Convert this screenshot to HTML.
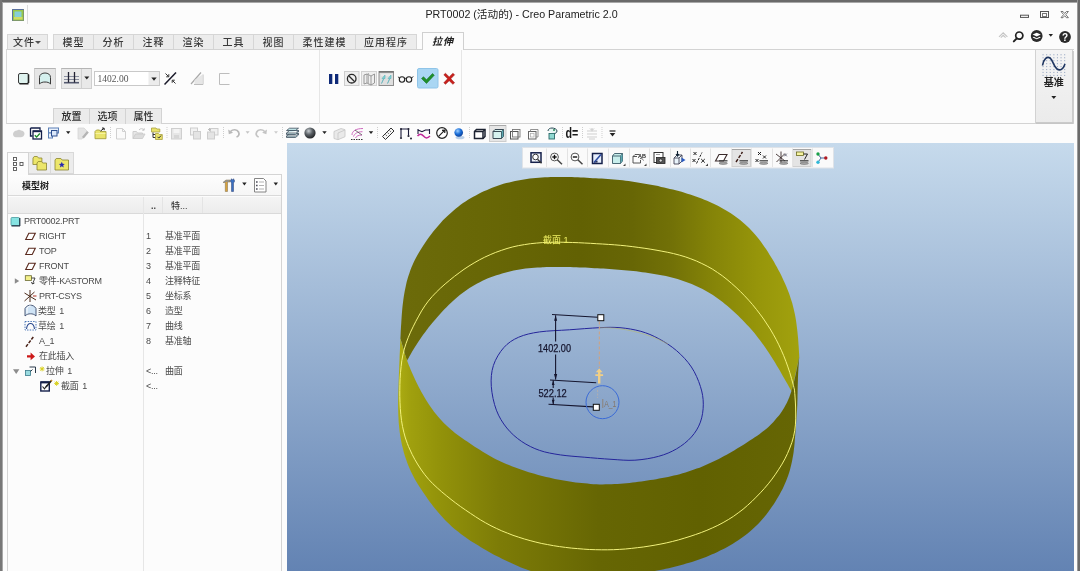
<!DOCTYPE html>
<html lang="zh-CN">
<head>
<meta charset="utf-8">
<title>PRT0002 (活动的) - Creo Parametric 2.0</title>
<style>
*{box-sizing:border-box;margin:0;padding:0}
html,body{width:1080px;height:571px;overflow:hidden;background:#fcfcfc}
body{position:relative;font-family:"Liberation Sans","Noto Sans CJK SC",sans-serif;font-size:9px;color:#3c3c3c}
.abs{position:absolute}
#title,.tab,.stab,.row,.txt,svg{will-change:transform}
#frameT{left:0;top:0;width:1080px;height:3px;background:#6a6a6a;border-bottom:1px solid #a8a8a8}
#frameL{left:0;top:0;width:2px;height:571px;background:#777}
#frameL2{left:2px;top:2px;width:1px;height:569px;background:#a8a8a8}
#frameR{left:1077px;top:0;width:3px;height:571px;background:#6a6a6a;border-left:1px solid #9a9a9a}
#frameR2{display:none}
#title{left:0;top:6px;width:1043px;text-align:center;font-size:10.7px;color:#222;white-space:nowrap}
/* ribbon tabs */
.tab{top:34px;height:15px;background:#ececec;border:1px solid #d6d6d6;border-bottom:none;font-size:10px;font-weight:500;line-height:16px;text-align:center;color:#3a3a3a;letter-spacing:1px;white-space:nowrap}
#tabActive{top:32px;height:18px;background:#fcfcfc;border:1px solid #d0d0d0;border-bottom:none;font-style:italic;font-weight:bold;color:#222;line-height:18px}
#ribbon{left:6px;top:49px;width:1068px;height:75px;border-top:1px solid #d3d3d3;border-bottom:1px solid #d3d3d3;border-left:1px solid #d9d9d9;background:#fcfcfc}
.stab{top:108px;height:16px;background:#ebebeb;border:1px solid #d3d3d3;border-bottom:none;font-size:10px;font-weight:500;line-height:15px;text-align:center;color:#2e2e2e;white-space:nowrap}
/* viewport */
#vp{left:287px;top:143px;width:787px;height:428px;background:linear-gradient(#c6daec 0%,#6383b3 100%);overflow:hidden}
/* tree */
#treeBox{left:7px;top:173px;width:275px;height:398px;border:1px solid #d2d2d2;border-bottom:none;background:#fcfcfc}
.row{height:15px;line-height:15px;font-size:9px;letter-spacing:-.25px;word-spacing:1.5px;color:#4a4a4a;white-space:nowrap}
</style>
</head>
<body>
<div id="frameT" class="abs"></div>
<div id="frameL" class="abs"></div>
<div id="frameL2" class="abs"></div>
<div id="frameR" class="abs"></div>
<div id="frameR2" class="abs"></div>

<div id="title" class="abs">PRT0002 (活动的) - Creo Parametric 2.0</div>

<div class="abs tab" style="left:7px;width:41px;text-align:left;padding-left:5px">文件<span class="abs" style="left:27px;top:6px;width:0;height:0;border:3px solid transparent;border-top:3px solid #555;border-bottom:none"></span></div>
<div class="abs tab" style="left:53px;width:41px">模型</div>
<div class="abs tab" style="left:93px;width:41px">分析</div>
<div class="abs tab" style="left:133px;width:41px">注释</div>
<div class="abs tab" style="left:173px;width:41px">渲染</div>
<div class="abs tab" style="left:213px;width:41px">工具</div>
<div class="abs tab" style="left:253px;width:41px">视图</div>
<div class="abs tab" style="left:293px;width:63px">柔性建模</div>
<div class="abs tab" style="left:355px;width:62px">应用程序</div>
<div id="tabActive" class="abs tab" style="left:422px;width:42px;z-index:3">拉伸</div>

<div id="ribbon" class="abs"></div>
<div class="abs stab" style="left:53px;width:37px">放置</div>
<div class="abs stab" style="left:89px;width:37px">选项</div>
<div class="abs stab" style="left:125px;width:37px">属性</div>
<svg class="abs" style="left:0;top:0;z-index:5" width="1080" height="143" viewBox="0 0 1080 143">
<!-- app icon -->
<rect x="12.500" y="9.500" width="11" height="11" fill="#98c848" stroke="#7f9a6a" stroke-width="1"/>
<path d="M12.500 20.500v-11h11" fill="none" stroke="#5a70a0" stroke-width="1"/>
<rect x="14.500" y="11.500" width="7" height="5.500" fill="#86cfd8"/>
<rect x="14" y="17" width="8.500" height="2.500" fill="#cfdc64"/>
<path d="M27.500 5v19" stroke="#dcdcdc" stroke-width="1"/>
<!-- window buttons -->
<g fill="none" stroke="#555" stroke-width="1">
<rect x="1020.5" y="15.2" width="8" height="2.2" fill="#fff"/>
<rect x="1040.5" y="11.5" width="8" height="6" />
<rect x="1042.5" y="13.5" width="4" height="3" stroke="#777"/>
<path d="M1061 11.5h2l1.7 2 1.7-2h2l-2.6 3.1 2.6 3.1h-2l-1.7-2-1.7 2h-2l2.6-3.1z" fill="#fff" stroke="#666" stroke-width=".9"/>
</g>
<!-- quick icons row -->
<path d="M999 36.8l4.2-4 4.2 4M1000.8 37.6l2.4-2.3 2.4 2.3" fill="none" stroke="#c4c4c4" stroke-width="1.1"/>
<circle cx="1019.3" cy="35.6" r="3.6" fill="none" stroke="#222" stroke-width="1.7"/>
<path d="M1016.8 38.4l-3 3" stroke="#222" stroke-width="2" stroke-linecap="round"/>
<circle cx="1036.7" cy="36" r="5.9" fill="#2b2b2b"/>
<path d="M1032.6 34.6l4.1-1.9 4.1 1.9-4.1 1.9zM1032.6 37.4l1.2-.6 2.9 1.4 2.9-1.4 1.2.6-4.1 1.9z" fill="#fff"/>
<path d="M1048.6 34l4.4 0-2.2 2.8z" fill="#222"/>
<circle cx="1065" cy="37" r="5.9" fill="#2b2b2b"/>
<text x="1065" y="40.6" font-family="Liberation Sans, sans-serif" font-weight="bold" font-size="10" fill="#fff" text-anchor="middle">?</text>

<!-- ribbon group separators -->
<path d="M319.5 50v74M461.5 50v74" stroke="#e6e6e6" stroke-width="1"/>
<!-- solid icon -->
<rect x="18.5" y="73.5" width="10" height="10" rx="1.5" fill="#dff3ef" stroke="#3a3a3a" stroke-width="1"/>
<path d="M28.5 74.5v8.5M19.5 83.7h9" stroke="#222" stroke-width="1.6" fill="none"/>
<!-- surface button (pressed) -->
<rect x="34.5" y="68.5" width="21" height="20" fill="#e6e6e6" stroke="#d0d0d0"/>
<path d="M34.5 68.5h21" stroke="#b5b5b5"/>
<path d="M39.5 84v-6.5c0-3 2.5-4.5 5.5-4.5s5.5 1.500 5.500 4.500v6.500c-1.500-1.500-3-2-5.500-2s-4 .5-5.500 2z" fill="#d5f0ee" stroke="#3a3a3a" stroke-width="1"/>
<!-- depth option button -->
<rect x="61.500" y="68.500" width="30" height="20" fill="#e9e9e9" stroke="#cfcfcf"/>
<path d="M61.500 68.500h30" stroke="#b5b5b5"/>
<path d="M81.500 69v19" stroke="#d0d0d0"/>
<path d="M64 76.500h15M64 79.500h15" stroke="#8a8fa0" stroke-width="1"/>
<path d="M64 82.700h15" stroke="#555a70" stroke-width="1.600"/>
<path d="M68.500 72v10.500M74.500 72v10.500" stroke="#223" stroke-width="1.300"/>
<path d="M84.300 76.500h5l-2.500 3z" fill="#222"/>
<!-- input -->
<rect x="94.500" y="71.500" width="65" height="14" fill="#fff" stroke="#c9c9c9"/>
<rect x="148.500" y="72" width="10.500" height="13" fill="#ececec"/>
<path d="M151.300 77.500h5.400l-2.700 3.200z" fill="#222"/>
<text x="97.500" y="82" font-family="Liberation Serif, serif" font-size="9.500" fill="#555" textLength="31" lengthAdjust="spacingAndGlyphs">1402.00</text>
<!-- flip icon -->
<path d="M164.500 84.500l11.500-12" stroke="#1a1a2a" stroke-width="1.500"/>
<path d="M165.500 73.500l3 3M168.800 76.800v-2.600M168.800 76.800h-2.600" stroke="#333" stroke-width="1" fill="none"/>
<path d="M175.500 83.500l-3-3M172.200 80.200v2.600M172.200 80.200h2.600" stroke="#333" stroke-width="1" fill="none"/>
<!-- disabled icons -->
<path d="M191 84l10-11.500" stroke="#a8a8a8" stroke-width="1.200"/>
<path d="M194 84.500h9v-10" stroke="#bdbdbd" stroke-width="1" fill="none"/>
<path d="M194.500 84v-4l8-5.500v9.500z" fill="#e6e6e6"/>
<path d="M229.500 73.500h-10v11h10" stroke="#bdbdbd" stroke-width="1" fill="none"/>
<!-- pause -->
<rect x="329" y="74" width="3.300" height="10" fill="#0f2a78"/>
<rect x="335" y="74" width="3.300" height="10" fill="#0f2a78"/>
<!-- no preview -->
<rect x="344.500" y="71.500" width="14.500" height="14" fill="#efefef" stroke="#cdcdcd"/>
<circle cx="351.700" cy="78.700" r="4.300" fill="none" stroke="#2a2a2a" stroke-width="1.300"/>
<path d="M348.700 75.700l6 6" stroke="#2a2a2a" stroke-width="1.300"/>
<!-- btn3 -->
<rect x="361.500" y="71.500" width="15" height="14" fill="#efefef" stroke="#d2d2d2"/>
<path d="M364 75l3-1v9l-3 1zM367 74l4 2v9l-4-2M371 76l3.500-2v9l-3.500 2" fill="none" stroke="#8e8e8e" stroke-width=".9"/>
<path d="M368.500 73v11.500" stroke="#aaa" stroke-width=".8"/>
<!-- btn4 pressed -->
<rect x="379" y="71.500" width="14.500" height="14" fill="#dedede" stroke="#8d8d8d"/>
<path d="M379 72h14.500" stroke="#6c6c6c" stroke-width="1.400"/>
<path d="M381 75h11" stroke="#f4f4f4" stroke-width="1"/>
<path d="M381.500 83.500l2-5h-1.500l3-3.500v3.500h-1zM387.500 83.500l2-5h-1.500l3-3.500v3.500h-1z" fill="#7fd6d6" stroke="#5ab0b8" stroke-width=".6"/>
<!-- glasses -->
<circle cx="402" cy="79.500" r="2.700" fill="none" stroke="#222" stroke-width="1.100"/>
<circle cx="409" cy="79.500" r="2.700" fill="none" stroke="#222" stroke-width="1.100"/>
<path d="M404.600 78.800q.9-.8 1.800 0M399.400 78.500l-1-1.800M411.500 78.200l1.700-1.800" fill="none" stroke="#222" stroke-width="1"/>
<!-- OK check -->
<rect x="417.500" y="68.500" width="20.500" height="19.500" rx="1.500" fill="#a9d6f3" stroke="#8fc4e8"/>
<path d="M421.500 78.500l2-1.800 3 3 6-6.200 1.800 1.700-7.800 8.300z" fill="#1f8f2a" stroke="#0f6a1a" stroke-width=".5"/>
<!-- cancel X -->
<path d="M443.800 74.800l1.700-1.500 3.700 3.600 3.700-3.600 1.700 1.500-3.800 4 3.800 4-1.700 1.500-3.700-3.600-3.700 3.600-1.700-1.500 3.800-4z" fill="#c8201c" stroke="#9a1410" stroke-width=".5"/>
<!-- datum button -->
<defs><linearGradient id="dg" x1="0" y1="0" x2="0" y2="1"><stop offset="0" stop-color="#f4f4f4"/><stop offset="1" stop-color="#ebebeb"/></linearGradient></defs><rect x="1035.500" y="49.500" width="37" height="73" fill="url(#dg)" stroke="#d2d2d2"/>
<path d="M1036 123.200h37M1073.200 51v72" stroke="#c2c2c2" stroke-width="1.200"/>
<g fill="#9fadc6">
<rect x="1042.5" y="54.2" width="1.100" height="1.100"/><rect x="1046.1" y="54.2" width="1.100" height="1.100"/><rect x="1049.7" y="54.2" width="1.100" height="1.100"/><rect x="1053.3" y="54.2" width="1.100" height="1.100"/><rect x="1056.9" y="54.2" width="1.100" height="1.100"/><rect x="1060.5" y="54.2" width="1.100" height="1.100"/><rect x="1064.1" y="54.2" width="1.100" height="1.100"/><rect x="1042.5" y="57.2" width="1.100" height="1.100"/><rect x="1046.1" y="57.2" width="1.100" height="1.100"/><rect x="1049.7" y="57.2" width="1.100" height="1.100"/><rect x="1053.3" y="57.2" width="1.100" height="1.100"/><rect x="1056.9" y="57.2" width="1.100" height="1.100"/><rect x="1060.5" y="57.2" width="1.100" height="1.100"/><rect x="1064.1" y="57.2" width="1.100" height="1.100"/><rect x="1042.5" y="60.1" width="1.100" height="1.100"/><rect x="1046.1" y="60.1" width="1.100" height="1.100"/><rect x="1049.7" y="60.1" width="1.100" height="1.100"/><rect x="1053.3" y="60.1" width="1.100" height="1.100"/><rect x="1056.9" y="60.1" width="1.100" height="1.100"/><rect x="1060.5" y="60.1" width="1.100" height="1.100"/><rect x="1064.1" y="60.1" width="1.100" height="1.100"/><rect x="1042.5" y="63.1" width="1.100" height="1.100"/><rect x="1046.1" y="63.1" width="1.100" height="1.100"/><rect x="1049.7" y="63.1" width="1.100" height="1.100"/><rect x="1053.3" y="63.1" width="1.100" height="1.100"/><rect x="1056.9" y="63.1" width="1.100" height="1.100"/><rect x="1060.5" y="63.1" width="1.100" height="1.100"/><rect x="1064.1" y="63.1" width="1.100" height="1.100"/><rect x="1042.5" y="66.0" width="1.100" height="1.100"/><rect x="1046.1" y="66.0" width="1.100" height="1.100"/><rect x="1049.7" y="66.0" width="1.100" height="1.100"/><rect x="1053.3" y="66.0" width="1.100" height="1.100"/><rect x="1056.9" y="66.0" width="1.100" height="1.100"/><rect x="1060.5" y="66.0" width="1.100" height="1.100"/><rect x="1064.1" y="66.0" width="1.100" height="1.100"/><rect x="1042.5" y="69.0" width="1.100" height="1.100"/><rect x="1046.1" y="69.0" width="1.100" height="1.100"/><rect x="1049.7" y="69.0" width="1.100" height="1.100"/><rect x="1053.3" y="69.0" width="1.100" height="1.100"/><rect x="1056.9" y="69.0" width="1.100" height="1.100"/><rect x="1060.5" y="69.0" width="1.100" height="1.100"/><rect x="1064.1" y="69.0" width="1.100" height="1.100"/><rect x="1042.5" y="71.9" width="1.100" height="1.100"/><rect x="1046.1" y="71.9" width="1.100" height="1.100"/><rect x="1049.7" y="71.9" width="1.100" height="1.100"/><rect x="1053.3" y="71.9" width="1.100" height="1.100"/><rect x="1056.9" y="71.9" width="1.100" height="1.100"/><rect x="1060.5" y="71.9" width="1.100" height="1.100"/><rect x="1064.1" y="71.9" width="1.100" height="1.100"/><rect x="1042.5" y="74.9" width="1.100" height="1.100"/><rect x="1046.1" y="74.9" width="1.100" height="1.100"/><rect x="1049.7" y="74.9" width="1.100" height="1.100"/><rect x="1053.3" y="74.9" width="1.100" height="1.100"/><rect x="1056.9" y="74.9" width="1.100" height="1.100"/><rect x="1060.5" y="74.9" width="1.100" height="1.100"/><rect x="1064.1" y="74.9" width="1.100" height="1.100"/>
</g>
<path d="M1042.500 65.500c1-6.500 4.500-9.500 7.500-7.500s3.500 8.500 7 11 6.500-.5 8-5" fill="none" stroke="#1e3560" stroke-width="1.600"/>
<text x="1053.800" y="86.300" font-family="Liberation Sans, Noto Sans CJK SC, sans-serif" font-weight="bold" font-size="10" fill="#222" text-anchor="middle">基准</text>
<path d="M1051.300 96h5l-2.500 3z" fill="#222"/>
<!-- quick toolbar -->
<path d="M13 134c0-2 2-3.600 4-3.600 1-1 3-1 4 0 2 0 3.500 1.500 3.500 3.300s-1.500 3.500-4 3.500h-4.500c-2 0-3-1.500-3-3.200z" fill="#cfcfcf"/>
<path d="M30.500 128h9.500v2M30.500 128v8h2" fill="none" stroke="#15204a" stroke-width="1.300"/>
<rect x="33" y="131" width="8.500" height="8" fill="#fff" stroke="#15204a" stroke-width="1.300"/>
<path d="M33 131.300h8.500" stroke="#15204a" stroke-width="1.800"/>
<path d="M34.800 135.300l1.800 1.800 3.200-3.600" fill="none" stroke="#1c8a2a" stroke-width="1.400"/>
<rect x="48.500" y="128" width="10" height="5" fill="#eaf1fb" stroke="#5a7fb5" stroke-width="1"/>
<rect x="48.500" y="133" width="4" height="5" fill="#eaf1fb" stroke="#5a7fb5" stroke-width="1"/>
<rect x="51.500" y="130.500" width="5.500" height="5.500" fill="#dbe8fa" stroke="#2d4f8f" stroke-width="1"/>
<path d="M66.0 131.2h4.4l-2.2 2.7z" fill="#222"/>
<path d="M78 128h6l3 3v2l-5 6h-4z" fill="#e4e4e4" stroke="#d5d5d5" stroke-width=".8"/>
<path d="M82 137l5-6 1.800 1.500-5 6z" fill="#b4b4b4"/>
<path d="M95 131.500l1.500-1.500h3l1 1.500h5.500v7.200h-11z" fill="#e9e36a" stroke="#a8a040" stroke-width=".9"/>
<path d="M95.500 133.500h10" stroke="#f6f2a0" stroke-width="1"/>
<path d="M100.500 131l3.500-2.600M104.200 128.200l-2.200-.2M104.200 128.200l0 2" stroke="#222" stroke-width="1" fill="none"/>
<path d="M110.5 127v12" stroke="#cfcfcf" stroke-width="1" stroke-dasharray="1 1"/>
<path d="M116.500 128.500h6l3 3v7.500h-9z" fill="#fafafa" stroke="#d0d0d0" stroke-width="1"/>
<path d="M122.500 128.500v3h3" fill="none" stroke="#d0d0d0" stroke-width="1"/>
<path d="M133 138.500v-7h3.500l1 1.500h5v1.500" fill="#e8e8e8" stroke="#cdcdcd" stroke-width="1"/>
<path d="M133 138.500l2.500-4.500h9.500l-2.500 4.500z" fill="#dcdcdc" stroke="#c8c8c8" stroke-width=".8"/>
<path d="M139 130c1.500-1.800 3.500-1.800 5 0M144.200 130.200v-2M144.200 130.200h-2" fill="none" stroke="#c4c4c4" stroke-width="1"/>
<path d="M151.500 128h4.500l.8 1h3v3h-8.300z" fill="#e9e36a" stroke="#a8a040" stroke-width=".8"/>
<path d="M153 132.500v5h3M153 134.500h2" stroke="#333" stroke-width="1" fill="none"/>
<path d="M155.500 133.500h3l.8 1h3v5h-6.800z" fill="#e9e36a" stroke="#a8a040" stroke-width=".8"/>
<path d="M157.500 136.800l1.300 1.300 2.200-2.500" fill="none" stroke="#333" stroke-width="1"/>
<path d="M167 127v12" stroke="#cfcfcf" stroke-width="1" stroke-dasharray="1 1"/>
<rect x="171.500" y="128.500" width="10" height="10.500" fill="#e6e6e6" stroke="#cfcfcf"/>
<rect x="173.500" y="129" width="6" height="4" fill="#f4f4f4"/><rect x="174" y="135" width="5" height="3.500" fill="#d6d6d6"/>
<rect x="190.500" y="128" width="7" height="7" fill="#f2f2f2" stroke="#cdcdcd"/>
<rect x="193.500" y="131.500" width="7" height="7.500" fill="#e4e4e4" stroke="#cdcdcd"/>
<rect x="210.500" y="128.500" width="7.500" height="6.500" fill="#f0f0f0" stroke="#cdcdcd"/>
<rect x="207.500" y="132" width="7" height="7" fill="#e4e4e4" stroke="#cdcdcd"/>
<path d="M208 129.500h3M209.500 128v3" stroke="#bdbdbd" stroke-width="1"/>
<path d="M223.5 127v12" stroke="#cfcfcf" stroke-width="1" stroke-dasharray="1 1"/>
<path d="M230.500 131.500c2.500-2.500 6.500-2.300 8 .5s-.5 4.500-2 5" fill="none" stroke="#b9b9b9" stroke-width="1.700"/>
<path d="M228.200 129.500l.6 4.800 4.300-1.600z" fill="#b9b9b9"/>
<path d="M245.6 131.2h4l-2.0 2.5z" fill="#c4c4c4"/>
<path d="M264.700 131.500c-2.500-2.500-6.500-2.300-8 .5s.5 4.500 2 5" fill="none" stroke="#c4c4c4" stroke-width="1.700"/>
<path d="M267 129.500l-.6 4.800-4.300-1.600z" fill="#c4c4c4"/>
<path d="M274.0 131.2h4l-2.0 2.5z" fill="#cdcdcd"/>
<path d="M282.5 127v12" stroke="#cfcfcf" stroke-width="1" stroke-dasharray="1 1"/>
<path d="M286.500 136l3-2.500h9l-3 2.500zM286.500 136v1.500h9l3-2.500v-1.500" fill="#cfe9ea" stroke="#2a3a4a" stroke-width=".7"/>
<path d="M286.500 133l3-2.500h9l-3 2.500zM286.500 133v1.500h9l3-2.500v-1.500" fill="#cfe9ea" stroke="#2a3a4a" stroke-width=".7"/>
<path d="M286.500 130.500l3-2.300h9l-3 2.300z" fill="#bfe3e6" stroke="#2a3a4a" stroke-width=".7"/>
<defs><radialGradient id="sph" cx=".38" cy=".32" r=".75"><stop offset="0" stop-color="#c9ced2"/><stop offset=".45" stop-color="#5b6166"/><stop offset="1" stop-color="#17191b"/></radialGradient><radialGradient id="bsph" cx=".38" cy=".32" r=".75"><stop offset="0" stop-color="#9fd0ff"/><stop offset=".5" stop-color="#1a6ed8"/><stop offset="1" stop-color="#0a3a90"/></radialGradient></defs>
<circle cx="310" cy="133" r="5.600" fill="url(#sph)"/>
<path d="M322.3 131.2h4.4l-2.2 2.7z" fill="#222"/>
<path d="M334 131.500l7-3 4 1.200v7l-7 3-4-1.200z" fill="#e9e9e9" stroke="#c9c9c9" stroke-width=".9"/><path d="M338 133v6.500M338 133l7-3" stroke="#c9c9c9" stroke-width=".9" fill="none"/>
<path d="M352 135c0-4 4-6.500 11-6.500M353.500 136.500c1-3 4-4.800 9-4.800M355.500 138c1-2 3-3 6.500-3" fill="none" stroke="#c85ab8" stroke-width=".9"/>
<path d="M351 139.500h12" stroke="#333" stroke-width="1" stroke-dasharray="1.500 1"/><path d="M355 130l7 5" stroke="#555" stroke-width=".8"/>
<path d="M368.8 131.2h4.4l-2.2 2.7z" fill="#222"/>
<path d="M377.5 127v12" stroke="#cfcfcf" stroke-width="1" stroke-dasharray="1 1"/>
<path d="M382.500 136.500l8.500-8.500 3 3-8.500 8.500z" fill="#f4f4f4" stroke="#333" stroke-width="1"/><path d="M385.500 134.500l1.500 1.500M387.500 132.500l1.500 1.500M389.500 130.500l1.500 1.500" stroke="#555" stroke-width=".8"/>
<path d="M401 137v-8h7.500v6" fill="none" stroke="#1a1a3a" stroke-width="1.100"/><circle cx="401" cy="138" r="1.100" fill="#223"/><circle cx="401" cy="129" r="1" fill="#223"/><circle cx="408.500" cy="129" r="1" fill="#223"/><circle cx="408.500" cy="136" r="1.100" fill="#223"/><circle cx="411" cy="138.500" r="1" fill="#223"/>
<path d="M418 129v5M429.500 129v5M418 130l4 1.700 3.500-1.700 4 0" fill="none" stroke="#1a1a3a" stroke-width="1.100"/><path d="M417.500 136c2-2.500 4-2.500 6 0s4 2.500 6.500 0" fill="none" stroke="#c02a9a" stroke-width="1.500"/>
<circle cx="442" cy="133" r="5.300" fill="#fff" stroke="#222" stroke-width="1.200"/><path d="M438.800 136.200l6-6M445 130l-3 .3M445 130l-.3 3" stroke="#222" stroke-width="1.200" fill="none"/>
<ellipse cx="460" cy="137.500" rx="4.500" ry="1.800" fill="#b9cfe8"/><circle cx="458.700" cy="132.500" r="4.300" fill="url(#bsph)"/>
<path d="M469.5 127v12" stroke="#cfcfcf" stroke-width="1" stroke-dasharray="1 1"/>
<path d="M474.5 131.5l2-2h8.500v7l-2 2h-8.500z" fill="#fff" stroke="#1c2230" stroke-width="1.5"/><path d="M474.5 131.5h8.500v7M483.0 131.5l2-2" fill="none" stroke="#1c2230" stroke-width="1.5"/>
<rect x="489.500" y="125.500" width="16.500" height="16" fill="#e6e6e6" stroke="#cdcdcd"/><path d="M489.500 125.500h16.500" stroke="#a9a9a9"/>
<path d="M493 131.5l2-2h8.500v7l-2 2h-8.500z" fill="#d6f2ef" stroke="#3a4a55" stroke-width="1"/><path d="M493 131.5h8.500v7M501.5 131.5l2-2" fill="none" stroke="#3a4a55" stroke-width="1"/><path d="M501.700 131.300l1.600-1.600v6.800l-1.600 1.600z" fill="#5aa8b0"/>
<rect x="510.500" y="131.500" width="7.500" height="7.500" fill="none" stroke="#555" stroke-width="1"/><rect x="512.500" y="129.500" width="7.500" height="7.500" fill="none" stroke="#777" stroke-width=".9"/>
<rect x="528.500" y="131.500" width="7.500" height="7.500" fill="none" stroke="#666" stroke-width="1"/><path d="M530.500 131.500v-2h7.500v7.500h-2" fill="none" stroke="#888" stroke-width=".9"/><rect x="530.500" y="133.500" width="3.500" height="3.500" fill="none" stroke="#aaa" stroke-width=".7"/>
<path d="M548 131c0-2 2-3 4-3s5 1 5 3-2 2.500-3 2.500" fill="#e8f6f4" stroke="#2a4a55" stroke-width="1"/><rect x="549" y="133.500" width="5.500" height="5.500" fill="#8fd8d0" stroke="#2a6a6a" stroke-width=".9"/><circle cx="554" cy="130" r="1" fill="#2a8a5a"/>
<path d="M562.5 127v12" stroke="#cfcfcf" stroke-width="1" stroke-dasharray="1 1"/>
<text x="565.500" y="138.300" font-family="Liberation Sans, sans-serif" font-size="14.500" font-weight="bold" fill="#1a1a1a" textLength="12.800" lengthAdjust="spacingAndGlyphs">d=</text>
<path d="M582.5 127v12" stroke="#cfcfcf" stroke-width="1" stroke-dasharray="1 1"/>
<path d="M587 131h4M593 131h4M587 134h10M587 137h10M589 139h6" stroke="#cfcfcf" stroke-width="1"/><path d="M590 128.500l2 2 2-2M592 128v4" stroke="#c6c6c6" stroke-width="1" fill="none"/>
<path d="M602 127v12" stroke="#cfcfcf" stroke-width="1" stroke-dasharray="1 1"/>
<path d="M609.500 131h6" stroke="#222" stroke-width="1.200"/><path d="M609.700 133h5.600l-2.800 3.400z" fill="#222"/>
<!--RIBICONS-->
</svg>
<!--RIBBON-->
<!--TOOLBAR-->
<div class="abs" style="left:7px;top:152px;width:22px;height:23px;border:1px solid #d4d4d4;border-bottom:none;background:#fcfcfc;z-index:2"></div>
<div class="abs" style="left:28px;top:152px;width:23px;height:22px;border:1px solid #d9d9d9;background:#ececec"></div>
<div class="abs" style="left:50px;top:152px;width:24px;height:22px;border:1px solid #d9d9d9;background:#ececec"></div>
<div class="abs" style="left:7px;top:174px;width:275px;height:397px;border:1px solid #d4d4d4;border-bottom:none;background:#fcfcfc"></div>
<div class="abs" style="left:8px;top:175px;width:273px;height:21px;background:linear-gradient(#fdfdfd,#f6f6f6);border-bottom:1px solid #d9d9d9"></div>
<div class="abs" style="left:8px;top:197px;width:273px;height:17px;background:linear-gradient(#f4f4f4,#ececec);border-bottom:1px solid #dadada"></div>
<div class="abs" style="left:143px;top:197px;width:1px;height:374px;background:#e6e6e6"></div>
<div class="abs" style="left:162px;top:197px;width:1px;height:16px;background:#e4e4e4"></div>
<div class="abs" style="left:202px;top:197px;width:1px;height:16px;background:#e4e4e4"></div>
<div class="abs txt" style="left:22px;top:180px;font-size:9px;font-weight:bold;color:#222;line-height:12px;white-space:nowrap">模型树</div>
<div class="abs txt" style="left:151px;top:200px;font-size:9px;font-weight:bold;color:#444;line-height:12px">..</div>
<div class="abs txt" style="left:171px;top:200px;font-size:9px;font-weight:500;color:#333;line-height:12px;white-space:nowrap">特...</div>
<div class="abs row" style="left:24px;top:214px">PRT0002.PRT</div>
<div class="abs row" style="left:39px;top:229px">RIGHT</div>
<div class="abs row" style="left:146px;top:229px">1</div>
<div class="abs row" style="left:165px;top:229px">基准平面</div>
<div class="abs row" style="left:39px;top:244px">TOP</div>
<div class="abs row" style="left:146px;top:244px">2</div>
<div class="abs row" style="left:165px;top:244px">基准平面</div>
<div class="abs row" style="left:39px;top:259px">FRONT</div>
<div class="abs row" style="left:146px;top:259px">3</div>
<div class="abs row" style="left:165px;top:259px">基准平面</div>
<div class="abs row" style="left:39px;top:274px">零件-KASTORM</div>
<div class="abs row" style="left:146px;top:274px">4</div>
<div class="abs row" style="left:165px;top:274px">注释特征</div>
<div class="abs row" style="left:39px;top:289px">PRT-CSYS</div>
<div class="abs row" style="left:146px;top:289px">5</div>
<div class="abs row" style="left:165px;top:289px">坐标系</div>
<div class="abs row" style="left:38px;top:304px">类型 1</div>
<div class="abs row" style="left:146px;top:304px">6</div>
<div class="abs row" style="left:165px;top:304px">造型</div>
<div class="abs row" style="left:38px;top:319px">草绘 1</div>
<div class="abs row" style="left:146px;top:319px">7</div>
<div class="abs row" style="left:165px;top:319px">曲线</div>
<div class="abs row" style="left:39px;top:334px">A_1</div>
<div class="abs row" style="left:146px;top:334px">8</div>
<div class="abs row" style="left:165px;top:334px">基准轴</div>
<div class="abs row" style="left:39px;top:349px">在此插入</div>
<div class="abs row" style="left:46px;top:364px">拉伸 1</div>
<div class="abs row" style="left:146px;top:364px">&lt;...</div>
<div class="abs row" style="left:165px;top:364px">曲面</div>
<div class="abs row" style="left:61px;top:379px">截面 1</div>
<div class="abs row" style="left:146px;top:379px">&lt;...</div>
<svg class="abs" style="left:0;top:143px;z-index:4" width="287" height="428" viewBox="0 143 287 428">
<rect x="13.5" y="157.5" width="3" height="3" fill="#fff" stroke="#555" stroke-width=".9"/>
<rect x="13.5" y="162.5" width="3" height="3" fill="#fff" stroke="#555" stroke-width=".9"/>
<rect x="13.5" y="167.5" width="3" height="3" fill="#fff" stroke="#555" stroke-width=".9"/>
<rect x="20.0" y="162.5" width="3" height="3" fill="#fff" stroke="#555" stroke-width=".9"/>
<path d="M33 158.0l1.200-1.500h3.1l1.200 1.500h3.4v6.5h-9z" fill="#ece66a" stroke="#8a8430" stroke-width=".8"/>
<path d="M37 163.0l1.200-1.500h3.3l1.200 1.500h3.8v7.0h-9.5z" fill="#ece66a" stroke="#8a8430" stroke-width=".8"/>
<path d="M55 160.0l1.200-1.500h4.7l1.200 1.500h6.4v10.0h-13.5z" fill="#ece66a" stroke="#8a8430" stroke-width=".8"/>
<path d="M61.800 161.800l.9 1.900 2.100.2-1.600 1.400.5 2.100-1.900-1.100-1.900 1.100.5-2.100-1.600-1.400 2.100-.2z" fill="#2a2ab0"/>
<path d="M223 182.500l3-2.500 4 0 0 2-2.500 0 0 9.500-2.200 0 0-9z" fill="#d9a23a" stroke="#7a6a4a" stroke-width=".5"/>
<path d="M223 182.800c1-2 3-3 6.500-2.800v1.800h-3z" fill="#8a9098"/>
<path d="M231.500 191.500v-8.500l-1.200-2 1.200-2.300 1 1.300 1-1.300 1.200 2.300-1.200 2v8.500z" fill="#3a6fc0" stroke="#2a3f70" stroke-width=".5"/>
<path d="M242.200 182.600h4.400l-2.200 2.800z" fill="#222"/>
<path d="M254.500 178.500h9l2.500 2.500v11h-11.500z" fill="#fff" stroke="#777" stroke-width=".9"/>
<path d="M256.200 182h1.300M256.200 185.500h1.300M256.200 189h1.300" stroke="#223" stroke-width="1.300"/><path d="M259 182h5M259 185.500h5M259 189h5" stroke="#aaa" stroke-width=".9"/>
<path d="M273.600 182.600h4.400l-2.200 2.800z" fill="#222"/>
<rect x="11" y="217.500" width="8.500" height="8" rx="1" fill="#86e3e2" stroke="#4a9aa0" stroke-width=".8"/><path d="M19.800 218v8M11.500 225.800h8.500" stroke="#234" stroke-width="1.200"/>
<path d="M25.700 239.5l3.100-6.300h6.500l-3.100 6.300z" fill="#fff" stroke="#5a2a1e" stroke-width="1.100"/>
<path d="M25.700 254.5l3.100-6.300h6.500l-3.100 6.300z" fill="#fff" stroke="#5a2a1e" stroke-width="1.100"/>
<path d="M25.700 269.5l3.100-6.300h6.500l-3.100 6.300z" fill="#fff" stroke="#5a2a1e" stroke-width="1.100"/>
<path d="M14.800 278.200l4.400 2.800-4.400 2.800z" fill="#8c8c8c"/>
<rect x="25.300" y="275.700" width="6.200" height="4.700" fill="#f3f08a" stroke="#6a6a30" stroke-width=".8"/><path d="M31.500 278h3.500l-2.500 6M32.500 284l-1.200-1.800M32.500 284l2-1" fill="none" stroke="#333" stroke-width=".9"/>
<path d="M30 290v12M24.500 293l11.500 7M24.500 301l10-9" stroke="#4a2a1a" stroke-width="1" fill="none"/><path d="M33 296h3.500" stroke="#b03020" stroke-width="1"/>
<path d="M25 316v-7.500c1.500-2.800 4-3.300 5.500-3.300s4 .5 5.500 3.300v7.500c-1.800-1.800-3.500-2.200-5.500-2.200s-3.700.4-5.500 2.200z" fill="#cfe3f5" stroke="#3a4a6a" stroke-width=".9"/><path d="M27 313.500v-5.500c1-1.500 2-2 3.500-2" fill="none" stroke="#fff" stroke-width="1"/>
<rect x="25" y="321.500" width="11" height="8.500" fill="none" stroke="#3a6ab0" stroke-width=".9" stroke-dasharray="1.500 1.200"/><path d="M26.500 329c.5-4 2-5.500 4-5.500s3.500 1.500 4 5.500" fill="none" stroke="#2a4a90" stroke-width="1.100"/>
<path d="M26 346.700l8-10.700" stroke="#4a2218" stroke-width="1.500" stroke-dasharray="3.200 1.300"/>
<path d="M27 355.300h3.600v-2.800l4.400 3.900-4.400 3.900v-2.800h-3.600z" fill="#cc1818"/>
<path d="M13 369.300h6.400l-3.200 4.700z" fill="#8c8c8c"/>
<rect x="25.500" y="370.500" width="5" height="5" fill="#9adbe0" stroke="#3a7a8a" stroke-width=".8"/><path d="M29.500 367h6v6M32.500 369.500l-2 2" fill="none" stroke="#2a3a4a" stroke-width="1"/>
<path d="M42.1 366.5v4.800M39.7 368.9h4.800M40.400000000000006 367.2l3.400 3.400M43.800000000000004 367.2l-3.400 3.400" stroke="#d8d020" stroke-width="1"/>
<rect x="40.800" y="382" width="8.500" height="9" fill="#fff" stroke="#15204a" stroke-width="1.400"/><path d="M40.800 382.400h8.500" stroke="#15204a" stroke-width="2"/><path d="M42.500 386.500l2 2.300 2.500-3.500" fill="none" stroke="#222" stroke-width="1.100"/><path d="M46 387l5.500-6.500" stroke="#222" stroke-width="1.600"/><path d="M50.800 381.300l1.200-1.400" stroke="#c88a2a" stroke-width="1.600"/>
<path d="M56.6 381v4.800M54.2 383.4h4.800M54.900000000000006 381.7l3.400 3.400M58.300000000000004 381.7l-3.400 3.400" stroke="#d8d020" stroke-width="1"/>
</svg>

<div id="vp" class="abs">
<svg class="abs" style="left:0;top:0" width="787" height="428" viewBox="287 143 787 428">
<defs>
<linearGradient id="gb" gradientUnits="userSpaceOnUse" x1="400" y1="0" x2="800" y2="0">
<stop offset="0" stop-color="#6c6b0a"/><stop offset=".2" stop-color="#686706"/><stop offset=".45" stop-color="#626103"/><stop offset=".58" stop-color="#676605"/><stop offset=".68" stop-color="#727107"/><stop offset=".78" stop-color="#858408"/><stop offset=".9" stop-color="#97960a"/><stop offset="1" stop-color="#a2a20e"/>
</linearGradient>
<linearGradient id="gf" gradientUnits="userSpaceOnUse" x1="398" y1="0" x2="800" y2="0">
<stop offset="0" stop-color="#acac12"/><stop offset=".03" stop-color="#a0a00e"/><stop offset=".1" stop-color="#93930a"/><stop offset=".25" stop-color="#7d7c07"/><stop offset=".5" stop-color="#666603"/><stop offset=".75" stop-color="#616101"/><stop offset="1" stop-color="#666604"/>
</linearGradient>
</defs>
<path d="M400.4 338.5C400.5 337.5 400.6 334.5 400.7 332.5C400.8 330.5 400.9 328.5 401.0 326.5C401.2 324.5 401.3 322.5 401.4 320.5C401.5 318.5 401.7 316.5 401.8 314.5C402.0 312.5 402.1 310.5 402.3 308.5C402.5 306.5 402.7 304.6 403.0 302.6C403.2 300.6 403.5 298.6 403.8 296.6C404.1 294.7 404.4 292.7 404.8 290.7C405.2 288.8 405.6 286.8 406.0 284.9C406.5 282.9 406.9 281.0 407.5 279.1C408.0 277.2 408.6 275.2 409.3 273.4C409.9 271.5 410.6 269.6 411.3 267.8C412.1 265.9 412.9 264.1 413.7 262.3C414.6 260.5 415.5 258.7 416.4 257.0C417.4 255.2 418.4 253.5 419.4 251.8C420.4 250.1 421.4 248.4 422.5 246.7C423.6 245.0 424.7 243.3 425.8 241.7C426.9 240.0 428.1 238.4 429.3 236.8C430.4 235.2 431.6 233.6 432.9 232.0C434.1 230.4 435.4 228.9 436.7 227.4C438.0 225.8 439.3 224.4 440.6 222.9C442.0 221.4 443.4 220.0 444.8 218.6C446.2 217.2 447.6 215.8 449.1 214.4C450.6 213.1 452.1 211.7 453.6 210.4C455.1 209.1 456.7 207.9 458.2 206.7C459.8 205.4 461.4 204.3 463.0 203.1C464.7 202.0 466.3 200.9 468.0 199.8C469.7 198.8 471.4 197.7 473.2 196.8C474.9 195.8 476.7 194.8 478.4 193.9C480.2 193.0 482.0 192.1 483.8 191.3C485.6 190.5 487.5 189.7 489.3 188.9C491.2 188.2 493.0 187.4 494.9 186.8C496.8 186.1 498.6 185.4 500.6 184.8C502.5 184.2 504.4 183.7 506.3 183.1C508.2 182.6 510.2 182.2 512.1 181.7C514.1 181.3 516.0 180.9 518.0 180.5C519.9 180.1 521.9 179.8 523.9 179.5C525.9 179.2 527.8 178.9 529.8 178.6C531.8 178.4 533.8 178.2 535.8 178.0C537.8 177.8 539.8 177.6 541.8 177.5C543.8 177.4 545.8 177.2 547.7 177.2C549.7 177.1 551.7 177.0 553.7 177.0C555.7 176.9 557.7 176.9 559.8 176.9C561.8 176.9 563.8 176.9 565.8 176.9C567.8 176.9 569.8 177.0 571.8 177.0C573.8 177.1 575.8 177.2 577.8 177.2C579.8 177.3 581.8 177.4 583.8 177.5C585.8 177.6 587.8 177.7 589.8 177.9C591.8 178.0 593.8 178.1 595.8 178.2C597.8 178.4 599.7 178.5 601.7 178.6C603.7 178.8 605.7 178.9 607.7 179.1C609.7 179.2 611.7 179.4 613.7 179.6C615.7 179.8 617.7 179.9 619.7 180.1C621.7 180.3 623.7 180.5 625.7 180.8C627.7 181.0 629.6 181.3 631.6 181.5C633.6 181.8 635.6 182.1 637.6 182.4C639.5 182.7 641.5 183.0 643.5 183.4C645.5 183.7 647.4 184.1 649.4 184.5C651.4 184.8 653.3 185.2 655.3 185.6C657.2 186.0 659.2 186.4 661.2 186.9C663.1 187.3 665.1 187.7 667.0 188.2C669.0 188.7 670.9 189.1 672.9 189.6C674.8 190.1 676.7 190.6 678.7 191.1C680.6 191.6 682.5 192.2 684.5 192.7C686.4 193.3 688.3 193.9 690.2 194.5C692.1 195.1 694.0 195.7 695.9 196.4C697.8 197.0 699.6 197.7 701.5 198.4C703.4 199.2 705.2 199.9 707.1 200.7C708.9 201.5 710.7 202.3 712.5 203.2C714.3 204.0 716.1 204.9 717.9 205.8C719.7 206.7 721.4 207.7 723.1 208.7C724.9 209.7 726.6 210.7 728.3 211.8C730.0 212.8 731.6 213.9 733.3 215.1C734.9 216.2 736.5 217.4 738.1 218.6C739.7 219.8 741.2 221.1 742.7 222.3C744.3 223.6 745.7 225.0 747.2 226.3C748.6 227.7 750.1 229.1 751.4 230.5C752.8 232.0 754.2 233.5 755.5 235.0C756.8 236.5 758.0 238.0 759.2 239.6C760.5 241.2 761.7 242.8 762.8 244.4C764.0 246.0 765.1 247.7 766.2 249.3C767.3 251.0 768.4 252.7 769.4 254.4C770.5 256.1 771.5 257.8 772.6 259.5C773.6 261.2 774.6 263.0 775.5 264.7C776.5 266.4 777.5 268.2 778.4 270.0C779.4 271.7 780.3 273.5 781.2 275.3C782.0 277.1 782.9 278.9 783.7 280.7C784.6 282.5 785.4 284.4 786.2 286.2C786.9 288.0 787.7 289.9 788.4 291.8C789.1 293.6 789.8 295.5 790.4 297.4C791.0 299.3 791.6 301.2 792.2 303.1C792.7 305.0 793.2 307.0 793.7 308.9C794.2 310.8 794.6 312.8 795.0 314.7C795.4 316.7 795.7 318.7 796.0 320.6C796.3 322.6 796.6 324.6 796.8 326.6C797.1 328.6 797.3 330.6 797.5 332.5C797.7 334.5 797.9 336.5 798.1 338.5C798.2 340.5 798.4 342.5 798.5 344.5C798.7 346.5 798.8 348.5 798.9 350.5C799.1 352.5 799.2 355.5 799.3 356.5L791.7 391.5C791.2 390.6 789.7 388.0 788.7 386.3C787.7 384.5 786.7 382.8 785.7 381.1C784.8 379.3 783.8 377.6 782.8 375.9C781.8 374.1 780.8 372.4 779.8 370.6C778.8 368.9 777.8 367.2 776.7 365.5C775.7 363.8 774.7 362.0 773.6 360.3C772.6 358.6 771.5 356.9 770.4 355.3C769.4 353.6 768.3 351.9 767.1 350.2C766.0 348.6 764.9 346.9 763.7 345.3C762.6 343.7 761.4 342.1 760.2 340.5C759.0 338.9 757.8 337.3 756.5 335.7C755.3 334.2 754.0 332.6 752.7 331.1C751.4 329.6 750.1 328.1 748.7 326.6C747.4 325.2 746.0 323.7 744.6 322.2C743.2 320.8 741.8 319.4 740.4 318.0C739.0 316.6 737.6 315.2 736.1 313.8C734.7 312.4 733.2 311.0 731.7 309.7C730.3 308.3 728.8 307.0 727.2 305.7C725.7 304.4 724.2 303.2 722.6 301.9C721.0 300.7 719.4 299.5 717.8 298.4C716.2 297.2 714.5 296.1 712.9 295.0C711.2 293.9 709.5 292.9 707.8 291.9C706.0 290.9 704.3 290.0 702.5 289.0C700.7 288.1 699.0 287.3 697.1 286.4C695.3 285.6 693.5 284.8 691.7 284.0C689.8 283.3 688.0 282.5 686.1 281.9C684.2 281.2 682.3 280.6 680.4 279.9C678.5 279.3 676.6 278.8 674.7 278.3C672.7 277.7 670.8 277.2 668.9 276.8C666.9 276.3 665.0 275.9 663.0 275.5C661.0 275.1 659.1 274.7 657.1 274.4C655.1 274.0 653.2 273.7 651.2 273.4C649.2 273.1 647.2 272.8 645.3 272.5C643.3 272.2 641.3 272.0 639.3 271.7C637.3 271.5 635.3 271.3 633.3 271.1C631.4 270.8 629.4 270.6 627.4 270.4C625.4 270.3 623.4 270.1 621.4 269.9C619.4 269.7 617.4 269.6 615.4 269.4C613.4 269.2 611.4 269.1 609.4 269.0C607.4 268.8 605.4 268.7 603.4 268.6C601.4 268.5 599.4 268.3 597.4 268.2C595.4 268.1 593.4 268.0 591.4 267.9C589.4 267.8 587.4 267.7 585.4 267.6C583.4 267.6 581.4 267.5 579.4 267.4C577.4 267.3 575.4 267.3 573.4 267.2C571.4 267.2 569.4 267.1 567.4 267.1C565.4 267.0 563.4 267.0 561.4 267.0C559.4 267.0 557.4 267.0 555.4 267.0C553.4 267.0 551.4 267.0 549.4 267.1C547.4 267.1 545.4 267.2 543.4 267.2C541.4 267.3 539.4 267.4 537.4 267.5C535.4 267.7 533.4 267.8 531.4 268.0C529.5 268.2 527.5 268.4 525.5 268.6C523.5 268.9 521.5 269.1 519.6 269.5C517.6 269.8 515.6 270.1 513.7 270.5C511.7 270.9 509.8 271.4 507.8 271.9C505.9 272.3 504.0 272.9 502.1 273.4C500.2 274.0 498.3 274.6 496.4 275.2C494.5 275.9 492.6 276.6 490.7 277.3C488.9 278.0 487.0 278.8 485.2 279.6C483.4 280.4 481.6 281.3 479.8 282.2C478.1 283.1 476.3 284.0 474.6 285.0C472.9 286.0 471.2 287.0 469.5 288.1C467.8 289.2 466.2 290.3 464.6 291.5C462.9 292.7 461.4 293.9 459.8 295.1C458.2 296.4 456.7 297.6 455.2 299.0C453.7 300.3 452.2 301.6 450.8 303.0C449.3 304.3 447.9 305.7 446.5 307.2C445.1 308.6 443.7 310.0 442.3 311.5C441.0 312.9 439.6 314.4 438.3 315.9C437.0 317.4 435.7 318.9 434.4 320.5C433.1 322.0 431.8 323.5 430.6 325.1C429.3 326.7 428.1 328.2 426.9 329.8C425.7 331.4 424.5 333.0 423.3 334.6C422.1 336.3 421.0 337.9 419.9 339.5C418.7 341.2 417.6 342.9 416.6 344.5C415.5 346.2 414.4 347.9 413.4 349.6C412.4 351.4 411.4 352.9 410.4 354.8C409.3 356.7 407.5 359.9 406.9 360.9Z" fill="url(#gb)"/>
<path d="M400.4 338.5C400.7 339.5 401.5 342.4 402.0 344.3C402.6 346.2 403.1 348.1 403.7 350.0C404.3 352.0 404.9 353.9 405.5 355.8C406.1 357.7 406.8 359.6 407.4 361.4C408.1 363.3 408.8 365.2 409.6 367.0C410.3 368.9 411.1 370.7 411.9 372.6C412.7 374.4 413.6 376.2 414.4 378.0C415.2 379.9 416.1 381.7 417.0 383.5C417.9 385.3 418.8 387.0 419.7 388.8C420.6 390.6 421.6 392.3 422.6 394.1C423.5 395.8 424.6 397.5 425.6 399.2C426.7 401.0 427.7 402.6 428.8 404.3C429.9 406.0 431.1 407.6 432.3 409.2C433.4 410.8 434.6 412.4 435.9 414.0C437.1 415.6 438.4 417.1 439.7 418.6C441.1 420.1 442.4 421.5 443.8 423.0C445.2 424.4 446.7 425.8 448.1 427.1C449.6 428.4 451.1 429.7 452.7 431.0C454.2 432.3 455.8 433.5 457.4 434.7C459.0 435.9 460.6 437.1 462.3 438.2C463.9 439.4 465.5 440.5 467.2 441.6C468.9 442.7 470.5 443.8 472.2 445.0C473.9 446.1 475.5 447.2 477.2 448.3C478.9 449.3 480.6 450.4 482.3 451.5C484.0 452.6 485.7 453.6 487.4 454.6C489.1 455.6 490.9 456.6 492.6 457.5C494.4 458.5 496.2 459.3 498.0 460.2C499.8 461.1 501.6 461.9 503.4 462.7C505.3 463.5 507.1 464.3 509.0 465.0C510.8 465.8 512.7 466.5 514.6 467.2C516.4 467.9 518.3 468.6 520.2 469.3C522.1 470.0 524.0 470.6 525.9 471.2C527.8 471.8 529.7 472.4 531.6 473.0C533.5 473.6 535.4 474.1 537.4 474.7C539.3 475.2 541.2 475.7 543.2 476.2C545.1 476.7 547.1 477.2 549.0 477.6C551.0 478.0 552.9 478.5 554.9 478.9C556.8 479.3 558.8 479.6 560.8 480.0C562.7 480.3 564.7 480.7 566.7 481.0C568.7 481.3 570.7 481.6 572.6 481.9C574.6 482.2 576.6 482.4 578.6 482.7C580.6 482.9 582.6 483.1 584.6 483.3C586.5 483.5 588.5 483.7 590.5 483.9C592.5 484.0 594.5 484.1 596.5 484.2C598.5 484.3 600.5 484.4 602.5 484.4C604.5 484.4 606.5 484.4 608.5 484.3C610.5 484.3 612.5 484.2 614.5 484.1C616.5 484.0 618.5 483.8 620.5 483.7C622.5 483.5 624.5 483.4 626.5 483.2C628.5 483.0 630.5 482.8 632.5 482.5C634.4 482.3 636.4 482.1 638.4 481.8C640.4 481.6 642.4 481.3 644.4 481.0C646.4 480.7 648.3 480.4 650.3 480.1C652.3 479.8 654.3 479.5 656.2 479.2C658.2 478.9 660.2 478.5 662.2 478.1C664.1 477.8 666.1 477.4 668.0 477.0C670.0 476.6 671.9 476.1 673.9 475.6C675.8 475.2 677.8 474.7 679.7 474.2C681.6 473.6 683.6 473.1 685.5 472.5C687.4 471.9 689.3 471.3 691.2 470.6C693.1 470.0 695.0 469.3 696.8 468.6C698.7 467.9 700.6 467.2 702.4 466.4C704.3 465.7 706.1 464.9 707.9 464.1C709.8 463.3 711.6 462.5 713.4 461.6C715.2 460.7 717.0 459.8 718.8 458.9C720.6 458.0 722.3 457.1 724.1 456.1C725.8 455.2 727.6 454.2 729.3 453.2C731.1 452.2 732.8 451.2 734.5 450.2C736.2 449.2 738.0 448.1 739.7 447.1C741.4 446.0 743.1 445.0 744.7 443.9C746.4 442.8 748.1 441.7 749.8 440.6C751.5 439.6 753.1 438.5 754.8 437.3C756.5 436.2 758.1 435.1 759.7 433.9C761.3 432.7 762.9 431.5 764.5 430.3C766.0 429.0 767.5 427.7 769.0 426.4C770.4 425.0 771.9 423.6 773.2 422.2C774.6 420.7 775.9 419.2 777.1 417.6C778.4 416.1 779.6 414.5 780.8 412.9C781.9 411.3 783.0 409.6 784.0 407.9C785.0 406.2 786.0 404.4 786.9 402.7C787.7 400.9 788.5 399.1 789.3 397.2C790.0 395.4 790.7 393.5 791.3 391.6C791.9 389.7 792.4 387.8 792.9 385.8C793.5 383.9 793.9 382.0 794.4 380.0C794.8 378.1 795.3 376.1 795.7 374.2C796.1 372.2 796.5 370.2 796.9 368.3C797.3 366.3 797.7 364.4 798.1 362.4C798.5 360.4 799.1 357.5 799.3 356.5L799.3 356.5C799.2 357.5 799.0 360.5 798.8 362.5C798.7 364.5 798.6 366.5 798.4 368.5C798.3 370.5 798.2 372.5 798.1 374.4C798.0 376.4 797.9 378.4 797.9 380.4C797.8 382.4 797.8 384.4 797.7 386.4C797.7 388.4 797.6 390.4 797.6 392.4C797.5 394.4 797.5 396.4 797.5 398.4C797.4 400.4 797.3 402.4 797.3 404.4C797.2 406.4 797.1 408.4 797.0 410.4C796.9 412.4 796.7 414.4 796.6 416.4C796.5 418.4 796.3 420.4 796.2 422.4C796.0 424.4 795.9 426.4 795.7 428.4C795.6 430.3 795.4 432.3 795.3 434.3C795.1 436.3 795.0 438.3 794.8 440.3C794.7 442.3 794.5 444.3 794.3 446.3C794.1 448.3 793.8 450.2 793.6 452.2C793.3 454.2 793.0 456.2 792.6 458.1C792.3 460.1 791.9 462.0 791.4 464.0C791.0 465.9 790.5 467.8 790.0 469.7C789.4 471.7 788.8 473.6 788.2 475.4C787.5 477.3 786.8 479.2 786.1 481.0C785.3 482.9 784.5 484.7 783.7 486.5C782.9 488.3 782.0 490.1 781.0 491.8C780.1 493.6 779.1 495.3 778.1 497.1C777.1 498.8 776.1 500.5 775.0 502.2C774.0 503.8 772.8 505.5 771.7 507.1C770.6 508.8 769.4 510.4 768.2 512.0C767.0 513.6 765.8 515.2 764.5 516.7C763.2 518.2 761.9 519.7 760.6 521.2C759.3 522.7 757.9 524.1 756.5 525.5C755.1 526.9 753.6 528.3 752.2 529.6C750.7 531.0 749.2 532.2 747.6 533.5C746.1 534.7 744.5 535.9 742.9 537.1C741.2 538.3 739.6 539.4 737.9 540.5C736.3 541.6 734.6 542.6 732.9 543.7C731.2 544.7 729.4 545.7 727.7 546.7C725.9 547.6 724.2 548.6 722.4 549.5C720.6 550.4 718.8 551.3 717.0 552.2C715.2 553.0 713.4 553.8 711.6 554.6C709.8 555.4 707.9 556.2 706.1 556.9C704.2 557.6 702.3 558.4 700.5 559.0C698.6 559.7 696.7 560.3 694.8 561.0C692.9 561.6 691.0 562.2 689.1 562.8C687.2 563.3 685.2 563.9 683.3 564.4C681.4 564.9 679.5 565.4 677.5 565.9C675.6 566.4 673.6 566.9 671.7 567.4C669.7 567.8 667.8 568.3 665.8 568.7C663.9 569.2 661.9 569.6 660.0 570.0C658.0 570.4 656.1 570.8 654.1 571.1C652.1 571.5 650.2 571.9 648.2 572.2C646.2 572.5 644.3 572.9 642.3 573.2C640.3 573.5 638.3 573.8 636.3 574.0C634.4 574.3 632.4 574.5 630.4 574.8C628.4 575.0 626.4 575.2 624.4 575.5C622.4 575.7 620.5 575.9 618.5 576.0C616.5 576.2 614.5 576.4 612.5 576.6C610.5 576.7 608.5 576.9 606.5 577.0C604.5 577.1 602.5 577.3 600.5 577.4C598.5 577.5 596.5 577.6 594.5 577.6C592.5 577.7 590.5 577.7 588.5 577.8C586.5 577.8 584.5 577.8 582.5 577.8C580.5 577.8 578.5 577.8 576.5 577.7C574.6 577.7 572.6 577.6 570.6 577.5C568.6 577.4 566.6 577.3 564.6 577.1C562.6 576.9 560.6 576.8 558.6 576.6C556.6 576.3 554.6 576.1 552.7 575.8C550.7 575.6 548.7 575.3 546.8 574.9C544.8 574.6 542.8 574.2 540.9 573.7C539.0 573.3 537.0 572.8 535.1 572.3C533.2 571.7 531.3 571.2 529.4 570.5C527.5 569.9 525.7 569.2 523.8 568.5C521.9 567.8 520.1 567.0 518.3 566.2C516.4 565.5 514.6 564.6 512.8 563.8C511.0 563.0 509.1 562.2 507.3 561.3C505.5 560.4 503.7 559.6 501.9 558.7C500.2 557.8 498.4 556.9 496.6 556.0C494.8 555.1 493.0 554.1 491.3 553.2C489.5 552.2 487.8 551.3 486.1 550.3C484.3 549.3 482.6 548.3 480.9 547.3C479.2 546.2 477.5 545.2 475.8 544.1C474.1 543.0 472.4 542.0 470.7 540.9C469.1 539.8 467.4 538.6 465.8 537.5C464.2 536.3 462.5 535.2 460.9 534.0C459.4 532.8 457.8 531.5 456.2 530.3C454.7 529.0 453.2 527.7 451.7 526.4C450.2 525.1 448.8 523.7 447.3 522.3C445.9 520.9 444.5 519.5 443.2 518.0C441.8 516.6 440.5 515.1 439.2 513.6C437.9 512.0 436.6 510.5 435.4 509.0C434.1 507.4 432.9 505.8 431.7 504.2C430.5 502.6 429.3 501.0 428.1 499.4C427.0 497.8 425.8 496.2 424.7 494.5C423.5 492.9 422.4 491.2 421.3 489.6C420.2 487.9 419.1 486.2 418.0 484.6C417.0 482.9 416.0 481.1 415.0 479.4C414.0 477.7 413.1 475.9 412.2 474.1C411.3 472.4 410.5 470.6 409.7 468.7C408.9 466.9 408.1 465.1 407.4 463.2C406.7 461.3 406.1 459.5 405.4 457.6C404.8 455.7 404.2 453.8 403.7 451.9C403.2 449.9 402.7 448.0 402.2 446.1C401.8 444.1 401.4 442.2 401.0 440.2C400.6 438.3 400.3 436.3 400.0 434.3C399.7 432.3 399.5 430.4 399.3 428.4C399.1 426.4 398.9 424.4 398.7 422.4C398.6 420.4 398.5 418.4 398.4 416.4C398.3 414.4 398.2 412.4 398.2 410.4C398.1 408.5 398.1 406.5 398.1 404.5C398.1 402.5 398.1 400.5 398.2 398.5C398.2 396.5 398.2 394.5 398.3 392.5C398.3 390.5 398.4 388.5 398.5 386.5C398.5 384.5 398.6 382.5 398.7 380.5C398.8 378.5 398.8 376.5 398.9 374.5C399.0 372.5 399.1 370.5 399.2 368.5C399.2 366.5 399.3 364.5 399.4 362.5C399.5 360.5 399.6 358.5 399.6 356.5C399.7 354.5 399.8 352.5 399.9 350.5C400.0 348.5 400.1 346.5 400.1 344.5C400.2 342.5 400.4 339.5 400.4 338.5Z" fill="url(#gf)"/>
<path d="M794.5 390.0C794.3 389.0 793.6 386.1 793.1 384.2C792.6 382.2 792.1 380.3 791.5 378.4C791.0 376.5 790.4 374.5 789.8 372.6C789.2 370.7 788.6 368.8 787.9 366.9C787.3 365.1 786.6 363.2 785.9 361.3C785.2 359.4 784.4 357.6 783.7 355.7C782.9 353.9 782.1 352.1 781.3 350.2C780.5 348.4 779.6 346.6 778.8 344.8C777.9 343.0 777.0 341.2 776.1 339.4C775.1 337.7 774.2 335.9 773.2 334.2C772.2 332.4 771.2 330.7 770.2 329.0C769.1 327.3 768.0 325.6 766.9 324.0C765.8 322.3 764.7 320.6 763.6 319.0C762.4 317.4 761.2 315.7 760.0 314.1C758.8 312.5 757.6 311.0 756.4 309.4C755.1 307.8 753.9 306.3 752.6 304.7C751.3 303.2 750.0 301.7 748.7 300.2C747.4 298.7 746.0 297.2 744.6 295.8C743.3 294.3 741.8 292.9 740.4 291.5C739.0 290.1 737.6 288.7 736.1 287.4C734.6 286.0 733.1 284.7 731.6 283.4C730.1 282.1 728.6 280.8 727.0 279.5C725.5 278.3 723.9 277.0 722.3 275.8C720.7 274.7 719.1 273.5 717.4 272.4C715.8 271.3 714.1 270.2 712.4 269.1C710.7 268.1 708.9 267.1 707.2 266.2C705.4 265.2 703.6 264.3 701.8 263.5C700.0 262.6 698.2 261.8 696.4 261.0C694.5 260.2 692.7 259.5 690.8 258.8C688.9 258.1 687.1 257.5 685.2 256.8C683.3 256.2 681.3 255.7 679.4 255.1C677.5 254.6 675.6 254.1 673.6 253.6C671.7 253.2 669.7 252.7 667.8 252.3C665.8 251.9 663.8 251.5 661.9 251.2C659.9 250.8 657.9 250.4 656.0 250.1C654.0 249.8 652.0 249.4 650.1 249.1C648.1 248.8 646.1 248.5 644.1 248.2C642.1 247.9 640.2 247.7 638.2 247.4C636.2 247.1 634.2 246.9 632.2 246.6C630.2 246.4 628.3 246.2 626.3 245.9C624.3 245.7 622.3 245.5 620.3 245.3C618.3 245.2 616.3 245.0 614.3 244.8C612.3 244.7 610.3 244.5 608.3 244.4C606.3 244.3 604.3 244.2 602.3 244.0C600.3 243.9 598.3 243.8 596.3 243.7C594.4 243.6 592.4 243.4 590.4 243.3C588.4 243.2 586.4 243.1 584.4 243.0C582.4 242.9 580.4 242.8 578.4 242.7C576.4 242.6 574.4 242.5 572.4 242.5C570.4 242.4 568.4 242.3 566.4 242.3C564.4 242.3 562.4 242.2 560.4 242.2C558.4 242.2 556.4 242.2 554.4 242.2C552.4 242.2 550.4 242.3 548.4 242.3C546.4 242.4 544.4 242.5 542.4 242.6C540.4 242.7 538.4 242.9 536.4 243.1C534.4 243.2 532.4 243.5 530.5 243.7C528.5 244.0 526.5 244.3 524.5 244.6C522.6 244.9 520.6 245.2 518.6 245.6C516.7 246.0 514.7 246.5 512.8 246.9C510.8 247.4 508.9 247.9 507.0 248.5C505.1 249.1 503.2 249.7 501.3 250.4C499.4 251.0 497.6 251.7 495.7 252.4C493.8 253.2 492.0 253.9 490.2 254.7C488.3 255.5 486.5 256.4 484.7 257.2C482.9 258.1 481.1 259.0 479.4 259.9C477.6 260.9 475.9 261.9 474.1 262.9C472.4 263.9 470.7 264.9 469.0 266.0C467.3 267.1 465.7 268.2 464.0 269.3C462.4 270.5 460.8 271.6 459.2 272.8C457.6 274.0 456.0 275.2 454.4 276.4C452.8 277.7 451.3 278.9 449.7 280.2C448.2 281.4 446.6 282.7 445.1 284.0C443.6 285.3 442.1 286.7 440.6 288.0C439.2 289.4 437.7 290.7 436.3 292.2C434.9 293.6 433.5 295.0 432.2 296.5C430.9 298.0 429.6 299.5 428.3 301.1C427.1 302.6 426.0 304.2 424.8 305.9C423.7 307.5 422.7 309.2 421.6 310.9C420.6 312.6 419.6 314.4 418.7 316.1C417.7 317.9 416.8 319.6 415.8 321.4C414.9 323.2 414.0 325.0 413.1 326.8C412.2 328.6 411.4 330.4 410.5 332.2C409.7 334.0 408.9 335.8 408.2 337.7C407.4 339.5 406.7 341.4 406.1 343.3C405.4 345.2 404.8 347.1 404.3 349.0C403.8 350.9 403.3 352.8 402.9 354.8C402.5 356.7 402.2 358.7 401.8 360.7C401.5 362.7 401.3 364.6 401.1 366.6C400.8 368.6 400.7 370.6 400.5 372.6C400.4 374.6 400.2 376.6 400.1 378.6C400.0 380.6 399.9 382.6 399.9 384.6C399.8 386.6 399.8 388.6 399.8 390.6C399.7 392.6 399.8 394.6 399.8 396.6C399.8 398.6 399.9 400.6 400.0 402.6C400.0 404.6 400.1 406.6 400.3 408.5C400.4 410.5 400.6 412.5 400.8 414.5C401.0 416.5 401.2 418.5 401.5 420.5C401.8 422.4 402.1 424.4 402.5 426.4C402.9 428.3 403.3 430.3 403.8 432.2C404.3 434.1 404.8 436.1 405.4 438.0C406.0 439.9 406.7 441.7 407.4 443.6C408.1 445.5 408.8 447.3 409.7 449.1C410.5 451.0 411.3 452.8 412.2 454.5C413.1 456.3 414.1 458.1 415.0 459.8C416.0 461.6 417.0 463.3 418.1 465.0C419.1 466.7 420.2 468.3 421.4 470.0C422.5 471.6 423.7 473.2 424.9 474.8C426.1 476.4 427.4 477.9 428.7 479.4C430.0 480.9 431.4 482.3 432.8 483.7C434.2 485.1 435.7 486.5 437.2 487.8C438.6 489.2 440.2 490.5 441.7 491.8C443.2 493.1 444.7 494.4 446.3 495.6C447.8 496.9 449.4 498.1 451.0 499.4C452.5 500.6 454.1 501.8 455.7 503.0C457.3 504.2 458.9 505.4 460.6 506.6C462.2 507.7 463.8 508.9 465.5 510.0C467.1 511.1 468.8 512.3 470.5 513.4C472.1 514.5 473.8 515.6 475.5 516.7C477.2 517.7 478.8 518.8 480.5 519.9C482.3 520.9 484.0 521.9 485.7 522.9C487.5 523.9 489.2 524.8 491.0 525.8C492.8 526.7 494.5 527.6 496.4 528.4C498.2 529.3 500.0 530.1 501.8 530.9C503.7 531.7 505.5 532.4 507.4 533.1C509.2 533.9 511.1 534.6 513.0 535.3C514.9 535.9 516.8 536.6 518.7 537.2C520.6 537.8 522.5 538.4 524.4 539.0C526.3 539.6 528.2 540.1 530.1 540.6C532.1 541.2 534.0 541.7 535.9 542.1C537.9 542.6 539.8 543.0 541.8 543.5C543.8 543.9 545.7 544.3 547.7 544.6C549.6 545.0 551.6 545.3 553.6 545.7C555.6 546.0 557.5 546.3 559.5 546.6C561.5 546.9 563.5 547.1 565.5 547.4C567.5 547.6 569.4 547.9 571.4 548.1C573.4 548.3 575.4 548.5 577.4 548.6C579.4 548.8 581.4 549.0 583.4 549.1C585.4 549.3 587.4 549.4 589.4 549.5C591.4 549.6 593.4 549.7 595.4 549.7C597.4 549.8 599.4 549.8 601.4 549.8C603.4 549.9 605.4 549.9 607.4 549.8C609.4 549.8 611.4 549.8 613.4 549.7C615.4 549.6 617.4 549.5 619.3 549.4C621.3 549.3 623.3 549.2 625.3 549.0C627.3 548.8 629.3 548.6 631.3 548.4C633.3 548.2 635.3 548.0 637.3 547.7C639.3 547.5 641.2 547.2 643.2 547.0C645.2 546.7 647.2 546.4 649.1 546.1C651.1 545.8 653.1 545.4 655.1 545.1C657.0 544.7 659.0 544.4 661.0 544.0C662.9 543.6 664.9 543.2 666.8 542.8C668.8 542.3 670.7 541.9 672.7 541.4C674.6 540.9 676.6 540.4 678.5 539.9C680.4 539.4 682.3 538.8 684.2 538.2C686.2 537.7 688.1 537.1 690.0 536.4C691.9 535.8 693.8 535.2 695.7 534.5C697.5 533.9 699.4 533.2 701.3 532.5C703.2 531.8 705.0 531.0 706.9 530.3C708.7 529.5 710.6 528.7 712.4 527.9C714.2 527.1 716.0 526.3 717.8 525.4C719.6 524.5 721.4 523.6 723.1 522.6C724.9 521.7 726.6 520.7 728.3 519.6C730.0 518.6 731.7 517.5 733.4 516.4C735.0 515.3 736.6 514.1 738.2 512.9C739.8 511.8 741.4 510.5 743.0 509.3C744.5 508.0 746.0 506.7 747.5 505.4C749.0 504.1 750.5 502.7 752.0 501.3C753.4 500.0 754.8 498.6 756.2 497.1C757.6 495.7 759.0 494.3 760.4 492.8C761.7 491.3 763.1 489.9 764.4 488.4C765.7 486.8 767.0 485.3 768.3 483.8C769.5 482.2 770.8 480.6 772.0 479.1C773.2 477.5 774.3 475.8 775.5 474.2C776.6 472.6 777.7 470.9 778.8 469.2C779.9 467.6 781.0 465.9 782.0 464.1C783.0 462.4 783.9 460.7 784.9 458.9C785.8 457.1 786.7 455.3 787.5 453.5C788.3 451.7 789.1 449.9 789.8 448.0C790.6 446.2 791.3 444.3 791.9 442.4C792.5 440.5 793.0 438.6 793.5 436.7C794.0 434.7 794.3 432.8 794.7 430.8C795.0 428.9 795.2 426.9 795.4 424.9C795.5 422.9 795.6 420.9 795.7 418.9C795.7 417.0 795.8 415.0 795.7 413.0C795.7 411.0 795.7 409.0 795.6 407.0C795.5 405.0 795.4 403.0 795.3 401.0C795.2 399.0 795.0 396.8 794.9 395.0C794.7 393.2 794.6 390.8 794.5 390.0" fill="none" stroke="#f2f27c" stroke-width="1"/>
<path d="M491.3 386.4C490.8 378.9 491.3 372.0 493.4 365.5C495.5 359.0 499.6 352.3 503.8 347.6C508.0 342.9 512.7 339.8 518.7 337.2C524.7 334.6 531.2 333.1 539.6 331.9C548.0 330.7 559.4 330.5 569.3 329.8C579.2 329.1 590.6 328.1 599.1 327.7C607.6 327.3 613.0 327.1 620.0 327.7C627.0 328.3 634.3 329.5 640.8 331.3C647.2 333.1 652.8 335.5 658.7 338.7C664.7 341.9 671.0 345.9 676.5 350.6C682.0 355.3 687.4 361.0 691.4 367.0C695.4 373.0 698.4 380.2 700.4 386.4C702.4 392.6 703.3 398.2 703.3 404.2C703.3 410.1 702.4 416.6 700.4 422.1C698.4 427.6 695.4 432.5 691.4 437.0C687.4 441.5 682.0 445.7 676.5 448.9C671.0 452.1 665.6 454.4 658.7 456.3C651.8 458.2 642.9 459.7 634.9 460.2C626.9 460.7 619.5 459.8 611.0 459.3C602.5 458.8 592.6 457.9 584.2 457.2C575.8 456.5 567.8 456.0 560.4 454.9C553.0 453.8 546.0 452.6 539.6 450.4C533.2 448.2 527.2 445.2 521.7 441.5C516.2 437.8 511.0 433.2 506.8 428.0C502.6 422.8 499.0 417.1 496.4 410.2C493.8 403.3 491.8 393.8 491.3 386.4Z" fill="none" stroke="#25259a" stroke-width="1"/>
<path d="M599.1 327.7C620 326.700 648 333 668 344" fill="none" stroke="#b8b86a" stroke-width=".8" opacity=".7"/>
<text x="543" y="242.600" font-family="Liberation Sans, Noto Sans CJK SC, sans-serif" font-size="9" fill="#f2f264">截面 1</text>
<g stroke="#15152e" stroke-width="1.100" fill="none">
<path d="M552 314.500L597.600 317.200M550 380L596.200 382.700M548.500 404.200L593 406.900"/>
<path d="M555.600 315.200V341.500M555.600 354.500V379.600M553.200 380.300V388M553.200 397.500V404"/>
</g>
<path d="M555.600 315.200l-1.500 5.500h3zM555.600 380l-1.600-6h3.200zM553.200 380.500l-1.400 4.500h2.800zM553.200 404.200l-1.400-4.500h2.800z" fill="#15152e"/>
<text x="538" y="352.300" font-family="Liberation Sans, sans-serif" font-size="10" fill="#15152e" stroke="#15152e" stroke-width=".25" textLength="33" lengthAdjust="spacingAndGlyphs">1402.00</text>
<text x="538.400" y="396.800" font-family="Liberation Sans, sans-serif" font-size="10" fill="#15152e" stroke="#15152e" stroke-width=".25" textLength="28.400" lengthAdjust="spacingAndGlyphs">522.12</text>
<path d="M599.300 321.500V368" stroke="#d2a27c" stroke-width="1" stroke-dasharray="3 2"/>
<path d="M599.200 368.500l-3.400 3.800h2.200v2h-2.700v1.800h2.700v7.400h2.400v-7.400h2.700v-1.800h-2.700v-2h2.200z" fill="#f1cf86"/>
<circle cx="602.500" cy="402.200" r="16.500" fill="none" stroke="#3a6ad6" stroke-width="1"/>
<path d="M597.600 390v8" stroke="#b9b0a8" stroke-width=".8" stroke-dasharray="2 1.500"/>
<path d="M602.800 399v9" stroke="#8c8278" stroke-width="1"/>
<text x="604.300" y="407.300" font-family="Liberation Sans, sans-serif" font-size="8.500" fill="#84766a" textLength="12" lengthAdjust="spacingAndGlyphs">A_1</text>
<rect x="597.800" y="314.700" width="6" height="6" fill="#fff" stroke="#111" stroke-width="1"/>
<rect x="593.300" y="404.300" width="6" height="6" fill="#fff" stroke="#111" stroke-width="1"/>
<!--MODEL-->
</svg>
<svg class="abs" style="left:233px;top:3px" width="316" height="24" viewBox="520 146 316 24">
<rect x="522.500" y="147.500" width="311" height="20.500" fill="#fafafa" stroke="#dfe3e8" stroke-width="1"/>
<rect x="732" y="149.500" width="18.5" height="17" fill="#e4e4e4" stroke="#cfcfcf" stroke-width="1"/><path d="M732 149.500h18.5" stroke="#a5a5a5"/>
<rect x="792.6" y="149.500" width="18.399999999999977" height="17" fill="#e4e4e4" stroke="#cfcfcf" stroke-width="1"/><path d="M792.6 149.500h18.399999999999977" stroke="#a5a5a5"/>
<path d="M546.5 148.500v18.500M567.5 148.500v18.500M587.5 148.500v18.500M608.5 148.500v18.500M629.5 148.500v18.500M649.5 148.500v18.500M670.5 148.500v18.500M690.5 148.500v18.500M710.5 148.500v18.500M731.5 148.500v18.500M751.5 148.500v18.500M772.5 148.500v18.500M792.5 148.500v18.500M812.5 148.500v18.500" stroke="#e3e3e3" stroke-width="1"/>
<rect x="531" y="152.800" width="10" height="9.500" fill="#eef2fa" stroke="#15204a" stroke-width="1.500"/><circle cx="535.500" cy="157" r="2.800" fill="#fff" stroke="#333" stroke-width="1"/><path d="M537.500 159.200l4 4" stroke="#333" stroke-width="1.300"/>
<circle cx="554.5" cy="157" r="3.900" fill="#fff" stroke="#555" stroke-width="1"/><path d="M557.3 159.8l4.700 4.400" stroke="#444" stroke-width="1.500"/>
<path d="M552.3 157h4.400" stroke="#111" stroke-width="1.400"/><path d="M554.5 154.8v4.400" stroke="#111" stroke-width="1.400"/>
<circle cx="575" cy="157" r="3.900" fill="#fff" stroke="#555" stroke-width="1"/><path d="M577.8 159.8l4.700 4.400" stroke="#444" stroke-width="1.500"/>
<path d="M572.8 157h4.400" stroke="#111" stroke-width="1.400"/>
<rect x="592.500" y="153.500" width="9.500" height="10" fill="#e6eefc" stroke="#15204a" stroke-width="1.500"/><path d="M594 162.500l7-8" stroke="#2a4aa0" stroke-width="1.500"/><path d="M594 162.500h3.500v-2z" fill="#15204a"/>
<path d="M612.500 156l2-2.500h8v7.500l-2 2.500h-8z" fill="#c8eeec" stroke="#3a5a66" stroke-width=".9"/><path d="M612.500 156h8v7.500M620.500 156l2-2.500" fill="none" stroke="#3a5a66" stroke-width=".9"/><path d="M620.700 156.300l1.700-2.200v7l-1.700 2.200z" fill="#5aa8b0"/>
<path d="M625.500 163.500v2.500h-2.500z" fill="#444"/>
<path d="M633 156.500l2-2h4M633 156.500v6.500h7.500v-3M633 156.500h4" fill="none" stroke="#444" stroke-width=".9"/><text x="638" y="157.500" font-family="Liberation Sans, sans-serif" font-size="5.500" font-weight="bold" fill="#222">AB</text><path d="M640 158.500c2 0 3 .5 3.500 2" fill="none" stroke="#444" stroke-width=".8"/>
<path d="M646.500 163.500v2.500h-2.500z" fill="#444"/>
<rect x="654" y="152.500" width="9" height="10" fill="#fff" stroke="#333" stroke-width="1"/><rect x="656.500" y="157.500" width="8.500" height="6" fill="#555" stroke="#222" stroke-width=".8"/><circle cx="660.700" cy="160.500" r="1.600" fill="#ddd" stroke="#111" stroke-width=".6"/><path d="M656 154.500h4" stroke="#888" stroke-width=".8"/>
<path d="M674 158l3-3h5v6l-3 3h-5z" fill="#eaf4fb" stroke="#445" stroke-width=".9"/><path d="M674 158h5v6M679 158l3-3" fill="none" stroke="#445" stroke-width=".9"/><path d="M677.500 151v4.500M676 154l1.500 2 1.500-2" fill="none" stroke="#123" stroke-width="1.100"/><path d="M681.500 157.500l4 2.500-4 2.500z" fill="#2a5ac0"/>
<path d="M693.5 152.0l3.0 3.0M696.5 152.0l-3.0 3.0" stroke="#222" stroke-width="1"/>
<path d="M692.5 159.0l3.0 3.0M695.5 159.0l-3.0 3.0" stroke="#222" stroke-width="1"/>
<path d="M701.2 159.0l3.6 3.6M704.8 159.0l-3.6 3.6" stroke="#222" stroke-width="1"/>
<path d="M696.500 163.500l5.500-11" stroke="#222" stroke-width="1" stroke-dasharray="2.500 1.200"/><path d="M708 163.500v2.500h-2.500z" fill="#444"/>
<path d="M715.500 161l3.500-6.500h8l-3.500 6.500z" fill="#fff" stroke="#3a2a2a" stroke-width="1.100"/>
<path d="M719 160.800h8.500" stroke="#3a3a3a" stroke-width="1.200"/><ellipse cx="723.2" cy="163.300" rx="4.200" ry="1.100" fill="#a8a8a8" stroke="#555" stroke-width=".5"/>
<path d="M736 162l6.500-10" stroke="#3a1a14" stroke-width="1.400" stroke-dasharray="3.500 1.300"/>
<path d="M739.5 160.800h8.500" stroke="#3a3a3a" stroke-width="1.200"/><ellipse cx="743.7" cy="163.300" rx="4.200" ry="1.100" fill="#a8a8a8" stroke="#555" stroke-width=".5"/>
<path d="M758.0 152.0l3.0 3.0M761.0 152.0l-3.0 3.0" stroke="#222" stroke-width="1"/>
<path d="M755.5 159.0l3.0 3.0M758.5 159.0l-3.0 3.0" stroke="#222" stroke-width="1"/>
<path d="M763.0 155.5l3.0 3.0M766.0 155.5l-3.0 3.0" stroke="#222" stroke-width="1"/>
<path d="M759.5 160.800h8.500" stroke="#3a3a3a" stroke-width="1.200"/><ellipse cx="763.7" cy="163.300" rx="4.200" ry="1.100" fill="#a8a8a8" stroke="#555" stroke-width=".5"/>
<path d="M781 151.500v11M776 154l9 7M776.500 162l8.500-8.500" stroke="#3a2a2a" stroke-width=".9"/>
<path d="M784.2 153.7l2.6 2.6M786.8 153.7l-2.6 2.6" stroke="#667" stroke-width="1"/>
<path d="M779.5 160.800h8.500" stroke="#3a3a3a" stroke-width="1.200"/><ellipse cx="783.7" cy="163.300" rx="4.200" ry="1.100" fill="#a8a8a8" stroke="#555" stroke-width=".5"/>
<rect x="796.500" y="152" width="7" height="3.500" fill="#f6f3a0" stroke="#6a6a20" stroke-width=".8"/><path d="M803.500 154h4l-3 5.500" fill="none" stroke="#222" stroke-width="1"/>
<path d="M800 160.800h8.500" stroke="#3a3a3a" stroke-width="1.200"/><ellipse cx="804.2" cy="163.300" rx="4.200" ry="1.100" fill="#a8a8a8" stroke="#555" stroke-width=".5"/>
<path d="M818 154.200l3 3.800-3 4.200M821 158h4.800" fill="none" stroke="#4a6a9a" stroke-width="1"/><circle cx="818" cy="154" r="1.700" fill="#18a048"/><circle cx="825.800" cy="158" r="1.700" fill="#b01820"/><circle cx="818" cy="162.300" r="1.700" fill="#30b8d8"/>
</svg>
<!--VP-->
</div>
</body>
</html>
